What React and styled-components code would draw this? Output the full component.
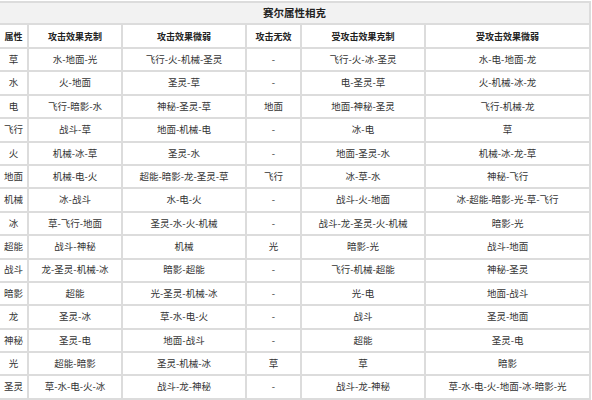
import React from "react";
import styled, { createGlobalStyle } from "styled-components";

const GlobalStyle = createGlobalStyle`
  html, body {
    margin: 0;
    padding: 0;
    background: #ffffff;
  }
  body {
    font-family: "Noto Sans CJK SC", "Noto Sans", sans-serif;
  }
`;

const Wrap = styled.div`
  width: 592px;
  height: 400px;
  padding-top: 1px;
  box-sizing: border-box;
  overflow: hidden;
`;

const Table = styled.table`
  width: 590px;
  table-layout: fixed;
  border-collapse: collapse;
  color: #333;
  font-size: 9.5px;
  line-height: 1;
`;

const TitleCell = styled.th`
  height: 20px;
  padding: 0;
  background: #f2f2f2;
  border: 2px solid #dcdcdc;
  border-left: 0;
  font-size: 10.5px;
  font-weight: bold;
  color: #222;
  text-align: center;
`;

const HeadCell = styled.th`
  height: 22px;
  padding: 0;
  border: 2px solid #dcdcdc;
  border-left: ${(p) => (p.$first ? "0" : "2px solid #dcdcdc")};
  font-size: 9px;
  font-weight: bold;
  color: #222;
  text-align: center;
  white-space: nowrap;
`;

const Cell = styled.td`
  height: 21.4px;
  padding: 0;
  border: 2px solid #dcdcdc;
  border-left: ${(p) => (p.$first ? "0" : "2px solid #dcdcdc")};
  text-align: center;
  white-space: nowrap;
`;

const widths = [28, 94, 124, 55, 124, 165];

const headers = ["属性", "攻击效果克制", "攻击效果微弱", "攻击无效", "受攻击效果克制", "受攻击效果微弱"];

const rows = [
  ["草", "水-地面-光", "飞行-火-机械-圣灵", "-", "飞行-火-冰-圣灵", "水-电-地面-龙"],
  ["水", "火-地面", "圣灵-草", "-", "电-圣灵-草", "火-机械-冰-龙"],
  ["电", "飞行-暗影-水", "神秘-圣灵-草", "地面", "地面-神秘-圣灵", "飞行-机械-龙"],
  ["飞行", "战斗-草", "地面-机械-电", "-", "冰-电", "草"],
  ["火", "机械-冰-草", "圣灵-水", "-", "地面-圣灵-水", "机械-冰-龙-草"],
  ["地面", "机械-电-火", "超能-暗影-龙-圣灵-草", "飞行", "冰-草-水", "神秘-飞行"],
  ["机械", "冰-战斗", "水-电-火", "-", "战斗-火-地面", "冰-超能-暗影-光-草-飞行"],
  ["冰", "草-飞行-地面", "圣灵-水-火-机械", "-", "战斗-龙-圣灵-火-机械", "暗影-光"],
  ["超能", "战斗-神秘", "机械", "光", "暗影-光", "战斗-地面"],
  ["战斗", "龙-圣灵-机械-冰", "暗影-超能", "-", "飞行-机械-超能", "神秘-圣灵"],
  ["暗影", "超能", "光-圣灵-机械-冰", "-", "光-电", "地面-战斗"],
  ["龙", "圣灵-冰", "草-水-电-火", "-", "战斗", "圣灵-地面"],
  ["神秘", "圣灵-电", "地面-战斗", "-", "超能", "圣灵-电"],
  ["光", "超能-暗影", "圣灵-机械-冰", "草", "草", "暗影"],
  ["圣灵", "草-水-电-火-冰", "战斗-龙-神秘", "-", "战斗-龙-神秘", "草-水-电-火-地面-冰-暗影-光"],
];

export default function App() {
  return (
    <Wrap>
      <GlobalStyle />
      <Table>
        <colgroup>
          {widths.map((w, i) => (
            <col key={i} style={{ width: w }} />
          ))}
        </colgroup>
        <thead>
          <tr>
            <TitleCell colSpan={6}>赛尔属性相克</TitleCell>
          </tr>
          <tr>
            {headers.map((h, i) => (
              <HeadCell key={h} $first={i === 0}>
                {h}
              </HeadCell>
            ))}
          </tr>
        </thead>
        <tbody>
          {rows.map((r) => (
            <tr key={r[0]}>
              {r.map((c, i) => (
                <Cell key={i} $first={i === 0}>
                  {c}
                </Cell>
              ))}
            </tr>
          ))}
        </tbody>
      </Table>
    </Wrap>
  );
}
